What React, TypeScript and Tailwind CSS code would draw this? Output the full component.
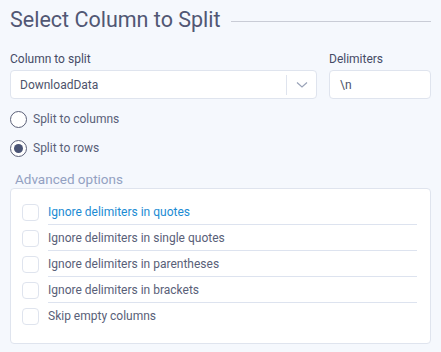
const options = [
  "Ignore delimiters in quotes",
  "Ignore delimiters in single quotes",
  "Ignore delimiters in parentheses",
  "Ignore delimiters in brackets",
  "Skip empty columns",
];

export default function App() {
  return (
    <div
      className="w-[441px] h-[352px] bg-[#f5f8fd] px-[10px] text-[12px] text-[#596078] overflow-hidden"
      style={{ fontFamily: 'Roboto, "Liberation Sans", sans-serif' }}
    >
      {/* Title */}
      <div className="flex items-center gap-[10px] h-[40px]">
        <h1 className="text-[21.5px] leading-none font-normal text-[#515774] whitespace-nowrap">
          Select Column to Split
        </h1>
        <div className="flex-1 h-px bg-[#c9ccd6] mt-[2px]" />
      </div>

      {/* Column + delimiter */}
      <div className="flex gap-[12px] mt-[9px]">
        <div className="w-[307px] flex flex-col">
          <label className="text-[#454b66] h-[20px] leading-[20px]">Column to split</label>
          <div className="mt-[1px] h-[29px] bg-white border border-[#dfe4ee] rounded-[4px] flex items-center">
            <span className="flex-1 pl-[9px] text-[#4d536b]">DownloadData</span>
            <div className="w-px h-[20px] bg-[#dfe4ee]" />
            <div className="w-[29px] flex items-center justify-center">
              <svg width="12" height="8" viewBox="0 0 12 8" fill="none">
                <path d="M1 1.5 L6 6 L11 1.5" stroke="#9aa3b8" strokeWidth="1.2" />
              </svg>
            </div>
          </div>
        </div>
        <div className="flex-1 flex flex-col">
          <label className="text-[#454b66] h-[20px] leading-[20px]">Delimiters</label>
          <div className="mt-[1px] h-[29px] bg-white border border-[#dfe4ee] rounded-[4px] flex items-center pl-[10px] text-[#4d536b]">
            \n
          </div>
        </div>
      </div>

      {/* Radios */}
      <div className="flex flex-col gap-[13px] mt-[12px]">
        <div className="flex items-center gap-[6px] h-[16px]">
          <span className="w-[17px] h-[17px] rounded-full border border-[#5b6078] bg-white" />
          <span>Split to columns</span>
        </div>
        <div className="flex items-center gap-[6px] h-[16px]">
          <span className="w-[17px] h-[17px] rounded-full border border-[#5b6078] bg-white flex items-center justify-center">
            <span className="w-[9px] h-[9px] rounded-full bg-[#4a5475]" />
          </span>
          <span>Split to rows</span>
        </div>
      </div>

      {/* Advanced */}
      <div className="mt-[14px] pl-[5px] text-[13.5px] text-[#93a1c2] leading-[18px]">Advanced options</div>
      <div className="h-[156px] bg-white border border-[#dfe4ee] rounded-[4px] pt-[10px] pl-[11px] pr-[13px]">
        {options.map((o, i) => (
          <div key={o} className="flex items-center h-[26px]">
            <span className="w-[17px] h-[17px] rounded-[4px] border border-[#dfe4ee] bg-white shrink-0" />
            <div
              className={
                "ml-[9px] flex-1 h-full flex items-center " +
                (i < options.length - 1 ? "border-b border-[#dde3ef]" : "")
              }
            >
              <span className={i === 0 ? "text-[#1b8bd3]" : "text-[#596078]"}>{o}</span>
            </div>
          </div>
        ))}
      </div>
    </div>
  );
}
